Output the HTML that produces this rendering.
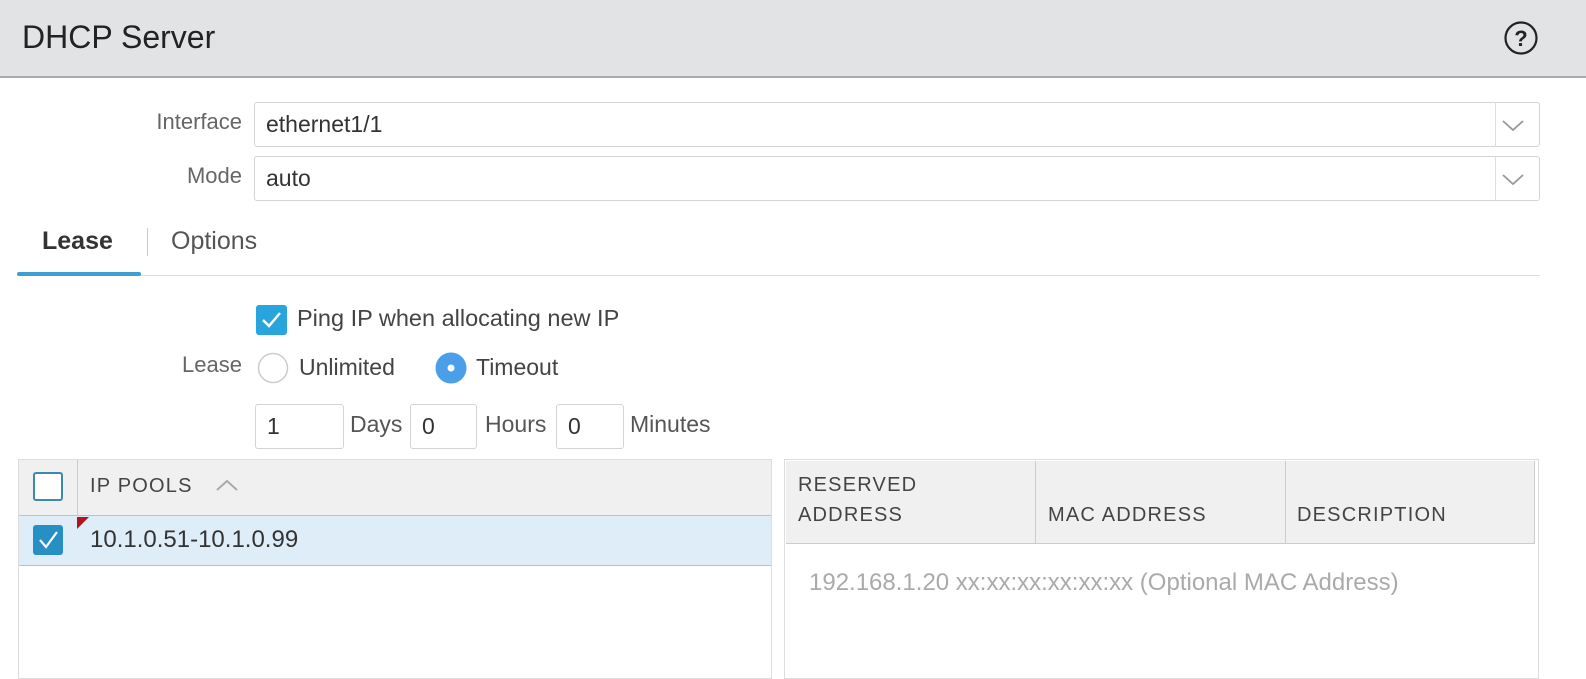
<!DOCTYPE html>
<html><head><style>
*{box-sizing:border-box;margin:0;padding:0}
body{width:1586px;height:668px;overflow:hidden;background:#fff;font-family:"Liberation Sans",sans-serif;position:relative;color:#333}
.a{position:absolute}
.lbl{position:absolute;right:1344px;font-size:22px;line-height:30px;color:#666;white-space:nowrap}
.inp{position:absolute;border:1px solid #d4d4d4;border-radius:3px;background:#fff;font-size:23px;color:#333;padding-left:11px;display:flex;align-items:center}
.t{position:absolute;font-size:23px;line-height:30px;white-space:nowrap;color:#444}
.hd{font-size:20px;line-height:30px;letter-spacing:1.2px;color:#444;position:absolute;white-space:nowrap}
</style></head><body>
<div class="a" style="left:0;top:0;width:1586px;height:78px;background:#e2e3e5;border-bottom:2px solid #a9a9a9"></div>
<div class="a" style="left:22px;top:17px;font-size:32px;line-height:40px;color:#222">DHCP Server</div>
<svg class="a" style="left:1503px;top:20px" width="36" height="36" viewBox="0 0 36 36"><circle cx="18" cy="18" r="15.5" fill="none" stroke="#222" stroke-width="2.2"/><text x="18" y="26" text-anchor="middle" font-size="22" font-weight="bold" font-family="Liberation Sans" fill="#222">?</text></svg>

<div class="lbl" style="top:107px">Interface</div>
<div class="inp" style="left:254px;top:102px;width:1286px;height:45px">ethernet1/1</div>
<div class="a" style="left:1495px;top:102px;width:45px;height:45px;border-left:1px solid #ddd"></div>
<svg class="a" style="left:1501px;top:117px" width="24" height="16"><path d="M2 4 L12 13 L22 4" fill="none" stroke="#999" stroke-width="1.8"/></svg>
<div class="lbl" style="top:161px">Mode</div>
<div class="inp" style="left:254px;top:156px;width:1286px;height:45px">auto</div>
<div class="a" style="left:1495px;top:156px;width:45px;height:45px;border-left:1px solid #ddd"></div>
<svg class="a" style="left:1501px;top:171px" width="24" height="16"><path d="M2 4 L12 13 L22 4" fill="none" stroke="#999" stroke-width="1.8"/></svg>

<div class="a" style="left:42px;top:226px;font-size:25px;line-height:30px;font-weight:bold;color:#333">Lease</div>
<div class="a" style="left:147px;top:228px;width:1px;height:28px;background:#ccc"></div>
<div class="a" style="left:171px;top:226px;font-size:25px;line-height:30px;color:#555">Options</div>
<div class="a" style="left:17px;top:275px;width:1523px;height:1px;background:#ddd"></div>
<div class="a" style="left:17px;top:272px;width:124px;height:4px;background:#3ba0cf;border-radius:2px"></div>

<svg class="a" style="left:256px;top:305px" width="32" height="30"><rect x="0" y="0" width="31" height="30" rx="3" fill="#29a5dd"/><path d="M7 15 L13 21 L24 8" fill="none" stroke="#fff" stroke-width="2.5"/></svg>
<div class="t" style="left:297px;top:303px;font-size:23.5px">Ping IP when allocating new IP</div>
<div class="lbl" style="top:350px">Lease</div>
<svg class="a" style="left:257px;top:352px" width="32" height="32"><circle cx="16" cy="16" r="14.5" fill="#fff" stroke="#ccc" stroke-width="1.5"/></svg>
<div class="t" style="left:299px;top:352px">Unlimited</div>
<svg class="a" style="left:435px;top:352px" width="32" height="32"><circle cx="16" cy="16" r="15.5" fill="#4a9fe8"/><circle cx="16" cy="16" r="3.5" fill="#fff"/></svg>
<div class="t" style="left:476px;top:352px">Timeout</div>

<div class="inp" style="left:255px;top:404px;width:89px;height:45px">1</div>
<div class="t" style="left:350px;top:409px;color:#555">Days</div>
<div class="inp" style="left:410px;top:404px;width:67px;height:45px">0</div>
<div class="t" style="left:485px;top:409px;color:#555">Hours</div>
<div class="inp" style="left:556px;top:404px;width:68px;height:45px">0</div>
<div class="t" style="left:630px;top:409px;color:#555">Minutes</div>

<div class="a" style="left:18px;top:459px;width:754px;height:220px;border:1px solid #ddd"></div>
<div class="a" style="left:19px;top:460px;width:752px;height:56px;background:#f0f0f0;border-bottom:1px solid #b8c4cc"></div>
<div class="a" style="left:77px;top:460px;width:1px;height:106px;background:#ccc"></div>
<div class="a" style="left:33px;top:472px;width:30px;height:29px;border:2px solid #3d88ad;border-radius:3px;background:#fff"></div>
<div class="hd" style="left:90px;top:471px">IP POOLS</div>
<svg class="a" style="left:214px;top:476px" width="26" height="18"><path d="M3 14 L13 5 L23 14" fill="none" stroke="#aaa" stroke-width="2"/></svg>
<div class="a" style="left:19px;top:516px;width:752px;height:50px;background:#deedf7;border-bottom:1px solid #b8c4cc"></div>
<svg class="a" style="left:33px;top:525px" width="32" height="32"><rect x="0" y="0" width="30" height="30" rx="3" fill="#268fc4"/><path d="M7 15 L13 22 L24 7" fill="none" stroke="#fff" stroke-width="2.2"/></svg>
<svg class="a" style="left:77px;top:517px" width="14" height="14"><path d="M0 0 H12 L0 12 Z" fill="#b0141c"/></svg>
<div class="a" style="left:90px;top:525px;font-size:24px;line-height:30px;color:#333">10.1.0.51-10.1.0.99</div>

<div class="a" style="left:784px;top:459px;width:755px;height:220px;border:1px solid #ddd"></div>
<div class="a" style="left:786px;top:461px;width:749px;height:83px;background:#f0f0f0;border-bottom:1px solid #ccc"></div>
<div class="a" style="left:1035px;top:461px;width:1px;height:83px;background:#ccc"></div>
<div class="a" style="left:1285px;top:461px;width:1px;height:83px;background:#ccc"></div>
<div class="a" style="left:1534px;top:461px;width:1px;height:83px;background:#ccc"></div>
<div class="hd" style="left:798px;top:470px">RESERVED<br>ADDRESS</div>
<div class="hd" style="left:1048px;top:500px">MAC ADDRESS</div>
<div class="hd" style="left:1297px;top:500px">DESCRIPTION</div>
<div class="a" style="left:809px;top:568px;font-size:24px;line-height:30px;color:#aaa;white-space:nowrap">192.168.1.20 xx:xx:xx:xx:xx:xx (Optional MAC Address)</div>
</body></html>
